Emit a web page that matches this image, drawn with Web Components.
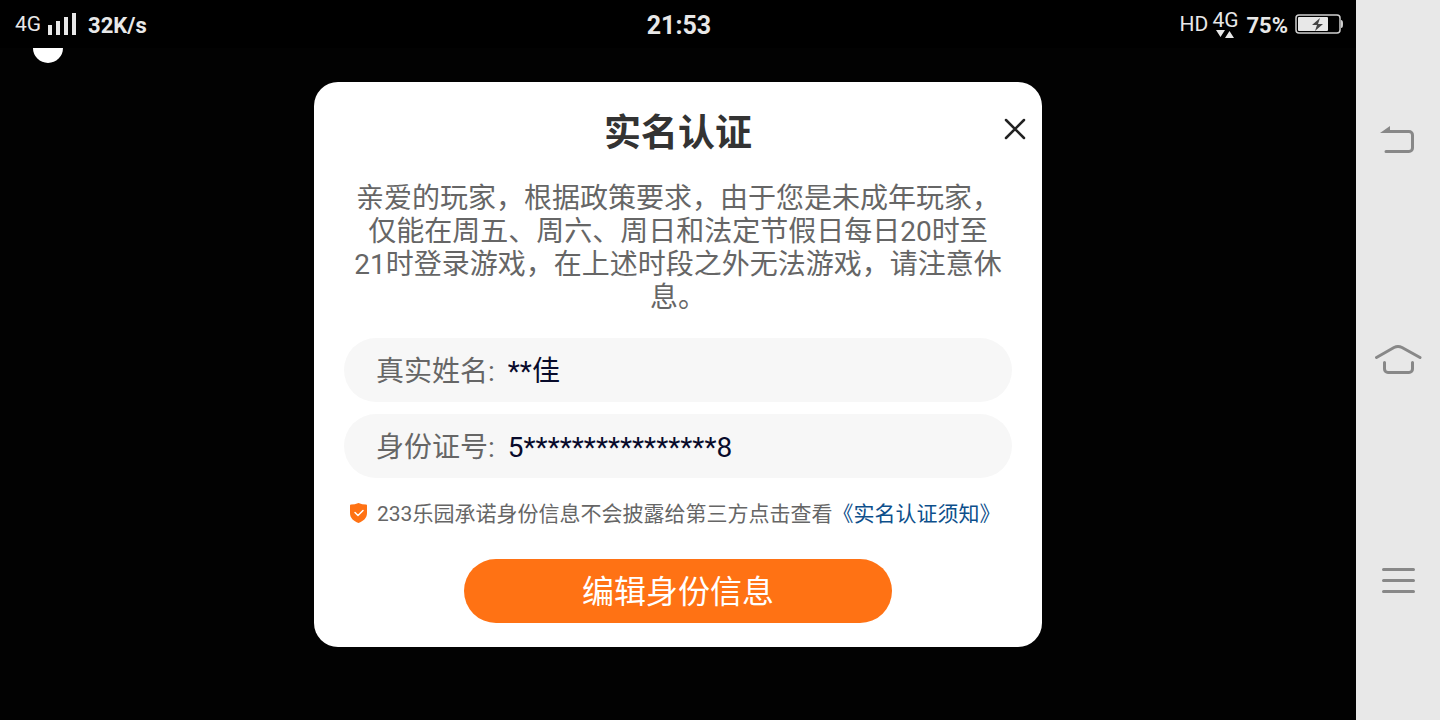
<!DOCTYPE html>
<html lang="zh-CN">
<head>
<meta charset="utf-8">
<meta name="viewport" content="width=device-width, initial-scale=1">
<title>实名认证</title>
<style>
  body {
    margin: 0;
    background: #000;
    font-family: Roboto, "Noto Sans CJK SC", sans-serif;
  }
</style>
</head>
<body>
<phone-screen>
  <status-bar slot="status" speed="32K/s" time="21:53" battery="75%"></status-bar>
  <verify-dialog heading="实名认证">
    亲爱的玩家，根据政策要求，由于您是未成年玩家，仅能在周五、周六、周日和法定节假日每日20时至21时登录游戏，在上述时段之外无法游戏，请注意休息。
    <info-field slot="fields" label="真实姓名:" value="**佳"></info-field>
    <info-field slot="fields" label="身份证号:" value="5****************8"></info-field>
    <privacy-note slot="note">233乐园承诺身份信息不会披露给第三方点击查看<a slot="link" href="#notice">《实名认证须知》</a></privacy-note>
    <pill-button slot="action">编辑身份信息</pill-button>
  </verify-dialog>
  <nav-keys slot="nav"></nav-keys>
</phone-screen>

<script>
class PhoneScreen extends HTMLElement {
  constructor() {
    super();
    this.attachShadow({ mode: 'open' });
  }

  connectedCallback() {
    this.shadowRoot.innerHTML = `
      <style>
        :host {
          display: flex;
          min-height: 100vh;
        }
        .display {
          flex: 1;
          display: flex;
          flex-direction: column;
          min-width: 0;
        }
        main {
          position: relative;
          flex: 1;
          display: flex;
          justify-content: center;
          align-items: flex-start;
          padding: 34px 16px;
          background: #020202;
        }
        /* floating ball, half tucked under the status bar */
        .ball {
          position: absolute;
          top: 0;
          left: 33px;
          width: 30px;
          height: 15px;
          border-radius: 0 0 15px 15px;
          background: #fff;
        }
      </style>
      <div class="display">
        <slot name="status"></slot>
        <main>
          <div class="ball"></div>
          <slot></slot>
        </main>
      </div>
      <slot name="nav"></slot>
    `;
  }
}

class StatusBar extends HTMLElement {
  constructor() {
    super();
    this.attachShadow({ mode: 'open' });
  }

  connectedCallback() {
    this.shadowRoot.innerHTML = `
      <style>
        :host {
          display: grid;
          grid-template-columns: 1fr auto 1fr;
          align-items: center;
          height: 48px;
          padding: 0 13px 0 15px;
          background: #000;
          color: #e8e8e8;
          font-size: 22px;
          line-height: 24px;
        }
        svg {
          display: block;
        }
        .side {
          display: flex;
          align-items: center;
        }
        .right {
          justify-content: flex-end;
        }
        .net-type {
          font-size: 21px;
        }
        .signal {
          margin: 0 12px 0 7px;
        }
        b {
          font-weight: 700;
          padding-top: 3px;
        }
        .time {
          font-size: 25px;
        }
        .hd {
          margin-right: 4px;
        }
        .net {
          display: flex;
          flex-direction: column;
          align-items: center;
          margin-right: 8px;
          line-height: 20px;
        }
        .battery {
          margin-left: 7px;
        }
      </style>
      <div class="side">
        <span class="net-type">4G</span>
        <svg class="signal" width="28" height="22" fill="#e8e8e8">
          <rect y="12" width="4" height="10"/>
          <rect x="8" y="8" width="4" height="14"/>
          <rect x="16" y="4" width="4" height="18"/>
          <rect x="24" width="4" height="22"/>
        </svg>
        <b>${this.getAttribute('speed')}</b>
      </div>
      <b class="time">${this.getAttribute('time')}</b>
      <div class="side right">
        <span class="net-type hd">HD</span>
        <div class="net net-type">
          <span>4G</span>
          <svg width="18" height="8" fill="#e8e8e8">
            <path d="M0 0h9L4.5 7zM9 8h9L13.5 1z"/>
          </svg>
        </div>
        <b>${this.getAttribute('battery')}</b>
        <svg class="battery" width="48" height="20">
          <rect x="1" y="1" width="44" height="18" rx="3" fill="none" stroke="#cfcfcf" stroke-width="1.5"/>
          <rect x="3" y="3" width="30" height="14" rx="1" fill="#e8e8e8"/>
          <path d="M46 6c1.5 0 2 1 2 4s-.5 4-2 4z" fill="#cfcfcf"/>
          <path d="M25 4l-8 7h5l-2 6 8-7h-5z" fill="#444"/>
        </svg>
      </div>
    `;
  }
}

class VerifyDialog extends HTMLElement {
  constructor() {
    super();
    this.attachShadow({ mode: 'open' });
  }

  connectedCallback() {
    this.shadowRoot.innerHTML = `
      <style>
        :host {
          display: block;
          box-sizing: border-box;
          width: 100%;
          max-width: 728px;
          padding: 26px 0 24px;
          border-radius: 24px;
          background: #fff;
        }
        header {
          display: grid;
          grid-template-columns: 24px 1fr 24px;
          padding: 0 15px;
        }
        h1 {
          grid-column: 2;
          margin: 0;
          font-size: 37px;
          line-height: 52px;
          font-weight: 700;
          text-align: center;
          color: #333;
        }
        .close {
          height: 42px;
          padding: 0;
          border: 0;
          background: none;
          cursor: pointer;
        }
        .close svg {
          display: block;
        }
        p {
          margin: 22px 40px 24px;
          font-size: 28px;
          line-height: 33px;
          text-align: center;
          color: #666;
        }
        .fields {
          display: flex;
          flex-direction: column;
          gap: 12px;
          padding: 0 30px;
        }
        .note {
          padding: 21px 35px 30px;
        }
        .action {
          display: flex;
          justify-content: center;
        }
      </style>
      <section role="dialog" aria-labelledby="title">
        <header>
          <h1 id="title">${this.getAttribute('heading')}</h1>
          <button class="close" type="button" aria-label="关闭">
            <svg width="24" height="24" fill="none" stroke="#222" stroke-width="2.5" stroke-linecap="round">
              <path d="M3 3l18 18M21 3L3 21"/>
            </svg>
          </button>
        </header>
        <p><slot></slot></p>
        <div class="fields"><slot name="fields"></slot></div>
        <div class="note"><slot name="note"></slot></div>
        <div class="action"><slot name="action"></slot></div>
      </section>
    `;
  }
}

class InfoField extends HTMLElement {
  constructor() {
    super();
    this.attachShadow({ mode: 'open' });
  }

  connectedCallback() {
    this.shadowRoot.innerHTML = `
      <style>
        :host {
          display: flex;
          align-items: center;
          gap: 13px;
          box-sizing: border-box;
          height: 64px;
          padding: 4px 32px 0;
          border-radius: 32px;
          background: #f7f7f7;
          font-size: 28px;
          line-height: 40px;
        }
        label {
          color: #666;
        }
        input {
          flex: 1;
          min-width: 0;
          height: 40px;
          padding: 0;
          border: 0;
          outline: 0;
          background: none;
          font: inherit;
          color: #080b2b;
        }
      </style>
      <label for="value">${this.getAttribute('label')}</label>
      <input id="value" type="text" readonly value="${this.getAttribute('value')}">
    `;
  }
}

class PrivacyNote extends HTMLElement {
  constructor() {
    super();
    this.attachShadow({ mode: 'open' });
  }

  connectedCallback() {
    this.shadowRoot.innerHTML = `
      <style>
        :host {
          display: flex;
          align-items: center;
          gap: 9px;
          font-size: 21px;
          line-height: 30px;
          color: #666;
        }
        svg {
          flex: none;
          margin-bottom: 2px;
        }
        ::slotted(a) {
          color: #0d4f8b;
          text-decoration: none;
        }
      </style>
      <svg width="19" height="20" fill="none">
        <path d="M9.5 0C12 1 14.500 1.500 17 1.500q1 0 1 1V10c0 5-3.500 8-8.500 10C4.500 18 1 15 1 10V2.500q0-1 1-1C4.500 1.500 7 1 9.500 0z" fill="#ff7214"/>
        <path d="M6 9.5l3 3 5-5" stroke="#fff" stroke-width="1.5" stroke-linecap="round" stroke-linejoin="round"/>
      </svg>
      <span><slot></slot><slot name="link"></slot></span>
    `;
  }
}

class PillButton extends HTMLElement {
  constructor() {
    super();
    this.attachShadow({ mode: 'open' });
  }

  connectedCallback() {
    this.shadowRoot.innerHTML = `
      <style>
        :host {
          display: block;
          width: 428px;
        }
        button {
          display: block;
          width: 100%;
          height: 64px;
          padding: 0 0 4px;
          border: 0;
          border-radius: 32px;
          background: #ff7214;
          color: #fff;
          font: inherit;
          font-size: 32px;
          cursor: pointer;
        }
      </style>
      <button type="button"><slot></slot></button>
    `;
  }
}

class NavKeys extends HTMLElement {
  constructor() {
    super();
    this.attachShadow({ mode: 'open' });
  }

  connectedCallback() {
    this.shadowRoot.innerHTML = `
      <style>
        :host {
          display: flex;
          flex-direction: column;
          box-sizing: border-box;
          width: 84px;
          padding: 30px 0;
          background: #e8e8e8;
        }
        button {
          flex: 1;
          display: flex;
          align-items: center;
          justify-content: center;
          padding: 0;
          border: 0;
          background: none;
          cursor: pointer;
        }
        svg {
          fill: none;
          stroke: #888;
          stroke-width: 3;
          stroke-linecap: round;
          stroke-linejoin: round;
        }
      </style>
      <button type="button" aria-label="返回">
        <svg width="48" height="48">
          <path d="M12 15.5H35a3.5 3.5 0 0 1 3.5 3.5V32a3.5 3.5 0 0 1-3.5 3.5H12"/>
          <path d="M6 17l10-7v7z" fill="#888" stroke="none"/>
        </svg>
      </button>
      <button type="button" aria-label="主页">
        <svg width="48" height="48">
          <path d="M2.5 21.5L20 11.5q4-2 8 0L46 21.5"/>
          <path d="M10.5 26.5V33a3.5 3.5 0 0 0 3.5 3.5H35a3.5 3.5 0 0 0 3.5-3.5V26.5"/>
        </svg>
      </button>
      <button type="button" aria-label="菜单">
        <svg width="48" height="48">
          <path d="M9.5 13.5h30M9.5 24.5h30M9.5 35.5h30"/>
        </svg>
      </button>
    `;
  }
}

customElements.define('phone-screen', PhoneScreen);
customElements.define('status-bar', StatusBar);
customElements.define('verify-dialog', VerifyDialog);
customElements.define('info-field', InfoField);
customElements.define('privacy-note', PrivacyNote);
customElements.define('pill-button', PillButton);
customElements.define('nav-keys', NavKeys);
</script>
</body>
</html>
